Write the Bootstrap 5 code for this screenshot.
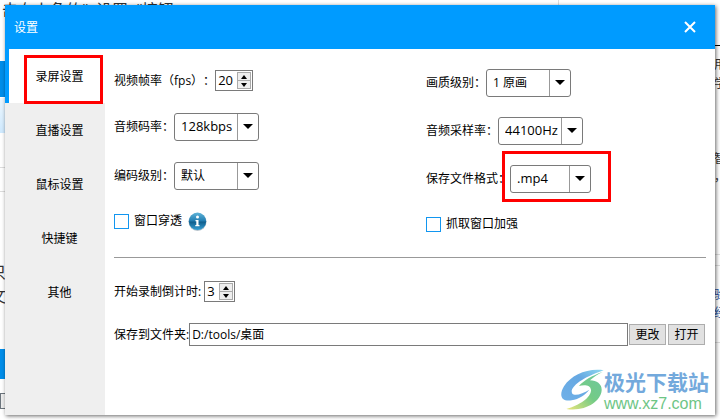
<!DOCTYPE html>
<html lang="zh-CN">
<head>
<meta charset="utf-8">
<meta name="viewport" content="width=device-width, initial-scale=1">
<title>设置</title>
<link href="https://cdn.jsdelivr.net/npm/bootstrap@5.3.0/dist/css/bootstrap.min.css" rel="stylesheet">
<style>
  :root { --brand: #009bff; --line: #7a7a7a; }
  body { font: 12px/16px "Open Sans", "Noto Sans CJK SC", sans-serif; color: #000; background: #fff; text-spacing-trim: space-all; }

  /* article page lying under the dialog */
  .under { z-index: 0; color: #333; font-size: 16px; line-height: 20px; }
  .under > * { position: absolute; white-space: pre; }
  .under-title { left: 2px; top: 0; }
  .under-rule { left: 558px; top: 0; width: 1px; height: 8px; background: #ddd; }
  .at-left { left: 0; width: 8px; }
  .at-right { right: 0; width: 6px; overflow: hidden; }
  .small-note { font-size: 12px; line-height: 16px; }
  .hair { height: 1px; background: #ddd; }

  .dialog-shell { z-index: 1; margin: 5px; min-height: calc(100vh - 10px); background: #fff; box-shadow: 1px 1px 4px rgba(0,0,0,.6); }
  .dialog-head { height: 44px; padding: 0 18px 0 9px; background: var(--brand); color: #fff; }
  .dialog-title { font-size: 12px; line-height: 16px; padding-top: 2px; }
  .close-x { width: 14px; height: 14px; color: #fff; }

  .side { width: 100px; background: #efefef; }
  .side .nav-link { height: 54px; padding: 2px 0 0 5px; border: 0; border-left: 4px solid transparent; border-radius: 0; color: #000; display: flex; align-items: center; justify-content: center; }
  .side .nav-link.active { background: #fff; color: #000; border-left-color: var(--brand); }
  .ring { position: absolute; border: 3px solid #f00; pointer-events: none; }
  .ring-tab { left: 15px; right: 2px; top: 6px; bottom: -1px; }
  .ring-format { left: -8px; top: -14px; width: 109px; height: 51px; }

  .pane { padding: 0 9px; }
  .options { display: grid; grid-template-columns: 312px 1fr; }
  .col-a { padding-top: 21px; gap: 22px; }
  .col-b { padding-top: 20px; gap: 21px; }
  .pick { width: 85px; height: 28px; padding: 0 20px 2px 6px; border: 1px solid var(--line); border-radius: 3px; color: #000; font-size: 13px; line-height: 20px;
    background: #fff url("data:image/svg+xml,%3Csvg xmlns='http://www.w3.org/2000/svg' width='21' height='26'%3E%3Cpath d='M0 0h1v26h-1z' fill='%23999'/%3E%3Cpath d='M6 10h10l-5 5z'/%3E%3C/svg%3E") right center / 21px 26px no-repeat; }
  .pick-cjk { font-size: 12px; padding-bottom: 0; }
  .pick-narrow { width: 81px; }
  .field-row { height: 27px; }
  .spin { border: 1px solid var(--line); height: 21px; padding: 1px; background: #fff; }
  .spin input { width: 20px; border: 0; padding: 0 0 0 1px; font-size: 13px; line-height: 17px; appearance: textfield; -moz-appearance: textfield; outline: 0; }
  .spin input::-webkit-inner-spin-button { display: none; }
  .spin .one-digit { width: 13px; }
  .spin button { width: 14px; height: 9px; padding: 0; border: 1px solid #aaa; background: #eee; display: flex; align-items: center; justify-content: center; }
  .spin button + button { margin-top: -1px; }
  .tick { appearance: none; width: 15px; height: 15px; margin: 0; border: 1px solid #1296f0; background: #fff; }
  .tick:checked { background: var(--brand); }
  .tick-row { height: 20px; gap: 5px; }
  .col-b .tick-row { height: 22px; }
  .tip { margin-left: 1px; width: 19px; height: 19px; }
  .divider { height: 1px; margin: 22px 0 23px; background: #999; }
  .path-row { margin-top: 21px; height: 23px; padding-right: 1px; }
  .path-box { min-width: 0; height: 23px; border: 1px solid var(--line); padding: 0 2px 2px; margin-right: 1px; }
  .plain-btn { width: 37px; height: 21px; padding: 0; border: 1px solid #adadad; border-radius: 0; background: #e1e1e1; font-size: 12px; line-height: 16px; color: #000; }
  .plain-btn + .plain-btn { margin-left: 2px; }

  .stamp { position: absolute; right: 6px; bottom: 0; height: 46px; color: #73a9dc; }
  .stamp-cn { font: 700 21px/24px "Noto Sans CJK SC", sans-serif; }
  .stamp-url { font: 16px/21px "Liberation Sans", Arial, sans-serif; color: #6dc585; }
</style>
<script src="https://cdn.jsdelivr.net/npm/bootstrap@5.3.0/dist/js/bootstrap.bundle.min.js"></script>
</head>
<body>
<div class="under position-absolute top-0 start-0 w-100 h-100 overflow-hidden" aria-hidden="true">
  <span class="under-title">击右上角的“  设置  “按钮</span>
  <span class="under-rule"></span>
  <span class="at-left" style="top:61px;height:36px;background:#008eea"></span>
  <span class="at-left" style="top:98px;height:35px;background:linear-gradient(#eef8ff,#cfeaff)"></span>
  <span class="at-left hair" style="top:167px"></span>
  <span class="at-left hair" style="top:191px"></span>
  <span class="at-left" style="top:262px;left:-10px;width:16px">只</span>
  <span class="at-left" style="top:286px;left:-10px;width:16px">文</span>
  <span class="at-left" style="top:349px;height:30px;background:#008eea"></span>
  <span class="at-left border border-secondary" style="top:393px;height:16px;background:#eee"></span>
  <span class="at-right" style="top:45px;height:1px;background:#000"></span>
  <span class="at-right small-note" style="top:57px">用</span>
  <span class="at-right small-note" style="top:76px">学</span>
  <span class="at-right small-note" style="top:151px">智</span>
  <span class="at-right small-note" style="top:169px">，</span>
  <span class="at-right hair" style="top:254px"></span>
  <span class="at-right hair" style="top:265px"></span>
  <span class="at-right small-note" style="top:287px;color:#1d4f9f">验</span>
  <span class="at-right small-note" style="top:305px;color:#1d4f9f">经</span>
  <span class="at-right hair" style="top:342px"></span>
</div>

<main class="dialog-shell position-relative d-flex flex-column" role="dialog" aria-labelledby="dlgTitle">
  <header class="dialog-head d-flex align-items-center justify-content-between">
    <h1 id="dlgTitle" class="dialog-title m-0 fw-normal">设置</h1>
    <button type="button" class="close-x btn p-0 border-0 d-flex" aria-label="关闭">
      <svg width="14" height="14" viewBox="0 0 14 14" fill="none" stroke="currentColor" stroke-width="2"><path d="M2 2l10 10M12 2L2 12"/></svg>
    </button>
  </header>

  <div class="d-flex flex-grow-1">
    <nav class="side nav nav-pills flex-column flex-shrink-0">
      <a class="nav-link active position-relative" href="#record">录屏设置<span class="ring ring-tab"></span></a>
      <a class="nav-link" href="#live">直播设置</a>
      <a class="nav-link" href="#mouse">鼠标设置</a>
      <a class="nav-link" href="#keys">快捷键</a>
      <a class="nav-link" href="#other">其他</a>
    </nav>

    <section class="pane flex-grow-1" id="record">
      <div class="options">
        <div class="col-a d-flex flex-column">
          <div class="d-flex align-items-center">
            <label for="fps" class="d-flex"><span>视频帧率（fps）</span><span>：</span></label>
            <div class="spin d-flex">
              <input id="fps" type="number" value="20">
              <div>
                <button type="button" aria-label="增加"><svg width="6" height="4"><path d="M0 4h6L3 0z"/></svg></button>
                <button type="button" aria-label="减少"><svg width="6" height="4"><path d="M0 0h6L3 4z"/></svg></button>
              </div>
            </div>
          </div>
          <div class="field-row d-flex align-items-center">
            <label for="bitrate">音频码率：</label>
            <select id="bitrate" class="form-select pick"><option>128kbps</option></select>
          </div>
          <div class="field-row d-flex align-items-center">
            <label for="codec">编码级别：</label>
            <select id="codec" class="form-select pick pick-cjk"><option>默认</option></select>
          </div>
          <div class="tick-row d-flex align-items-center">
            <input class="tick" type="checkbox" id="through">
            <label for="through">窗口穿透</label>
            <svg class="tip" viewBox="0 0 19 19" role="img" aria-label="说明">
              <defs><linearGradient id="ball" x1="0" y1="0" x2="0" y2="1"><stop offset="0" stop-color="#5fb4d8"/><stop offset=".45" stop-color="#2581b5"/><stop offset=".55" stop-color="#11608f"/><stop offset="1" stop-color="#36a0d5"/></linearGradient></defs>
              <circle cx="9.500" cy="10" r="9" fill="#b8c4cc"/>
              <circle cx="9.500" cy="9.300" r="8.700" fill="url(#ball)"/>
              <circle cx="9.500" cy="5" r="1.500" fill="#fff"/>
              <path d="M7.500 8h3v5h1v1.300H7.300V13h1V9.200h-.8z" fill="#fff"/>
            </svg>
          </div>
        </div>

        <div class="col-b d-flex flex-column">
          <div class="field-row d-flex align-items-center">
            <label for="quality">画质级别：</label>
            <select id="quality" class="form-select pick pick-cjk"><option>1 原画</option></select>
          </div>
          <div class="field-row d-flex align-items-center">
            <label for="sample">音频采样率：</label>
            <select id="sample" class="form-select pick"><option>44100Hz</option></select>
          </div>
          <div class="field-row d-flex align-items-center">
            <label for="format">保存文件格式：</label>
            <div class="position-relative">
              <select id="format" class="form-select pick pick-narrow"><option>.mp4</option></select>
              <span class="ring ring-format"></span>
            </div>
          </div>
          <div class="tick-row d-flex align-items-center">
            <input class="tick" type="checkbox" id="grab">
            <label for="grab">抓取窗口加强</label>
          </div>
        </div>
      </div>

      <div class="divider"></div>

      <div class="d-flex align-items-center">
        <label for="countdown">开始录制倒计时:&nbsp;</label>
        <div class="spin d-flex">
          <input id="countdown" class="one-digit" type="number" value="3">
          <div>
            <button type="button" aria-label="增加"><svg width="6" height="4"><path d="M0 4h6L3 0z"/></svg></button>
            <button type="button" aria-label="减少"><svg width="6" height="4"><path d="M0 0h6L3 4z"/></svg></button>
          </div>
        </div>
      </div>
      <div class="path-row d-flex align-items-center">
        <label for="folder" class="flex-shrink-0">保存到文件夹:</label>
        <input id="folder" class="path-box flex-grow-1" type="text" value="D:/tools/桌面">
        <button type="button" class="btn plain-btn flex-shrink-0">更改</button>
        <button type="button" class="btn plain-btn flex-shrink-0">打开</button>
      </div>
    </section>
  </div>

  <div class="stamp d-flex">
    <svg width="44" height="42" viewBox="15 27 132 126" aria-hidden="true">
      <defs>
        <linearGradient id="sw1" x1="1" y1="0" x2="0" y2="1"><stop offset="0" stop-color="#8fd8f0"/><stop offset=".4" stop-color="#66a8e2"/><stop offset="1" stop-color="#6fb0e8"/></linearGradient>
        <linearGradient id="sw2" x1="1" y1="0" x2="0" y2="1"><stop offset="0" stop-color="#6cc7a0"/><stop offset=".5" stop-color="#74cb86"/><stop offset="1" stop-color="#ece67a"/></linearGradient>
      </defs>
      <path d="M146 31C98 24 50 44 27 79C10 107 20 126 50 121C72 117 92 104 103 89C84 101 60 109 52 101C42 86 72 56 146 31z" fill="url(#sw1)"/>
      <path d="M143 36C112 46 84 63 72 78C88 73 107 75 108 90C109 112 74 136 34 147C88 156 138 126 140 91C141 72 126 62 105 61C116 51 128 43 143 36z" fill="url(#sw2)"/>
    </svg>
    <div>
      <div class="stamp-cn">极光下载站</div>
      <div class="stamp-url">www.xz7.com</div>
    </div>
  </div>
</main>
</body>
</html>
